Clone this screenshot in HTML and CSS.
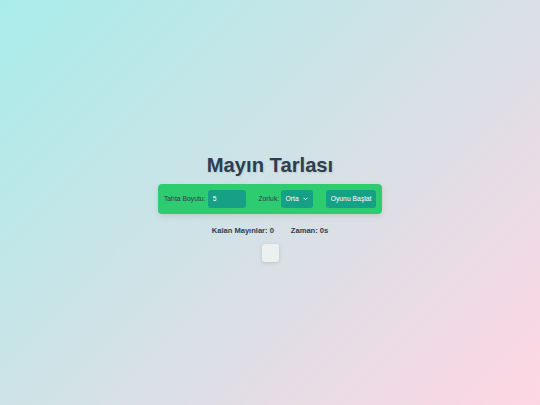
FILE: index.html
```html
<!DOCTYPE html>
<html lang="tr">
<head>
<meta charset="utf-8">
<title>Mayın Tarlası</title>
<link rel="stylesheet" href="styles.css">
</head>
<body>
<h1 class="title">Mayın Tarlası</h1>
<div class="controls">
  <label class="label" for="size">Tahta Boyutu:</label>
  <input class="input" id="size" type="number" value="5">
  <label class="label label-gap" for="level">Zorluk:</label>
  <span class="select-wrap">
    <select class="select" id="level">
      <option>Kolay</option>
      <option selected>Orta</option>
      <option>Zor</option>
    </select>
    <svg class="chevron" width="5" height="4" viewBox="0 0 10 7" aria-hidden="true"><path d="M1.5 1.5 L5 5 L8.5 1.5" fill="none" stroke="#fff" stroke-width="2" stroke-linecap="round" stroke-linejoin="round"/></svg>
  </span>
  <button class="button">Oyunu Başlat</button>
</div>
<div class="status">
  <span>Kalan Mayınlar: 0</span>
  <span>Zaman: 0s</span>
</div>
<div class="board"></div>
</body>
</html>
```

FILE: styles.css
```css
html, body {
  margin: 0;
  height: 100%;
}
body {
  font-family: "Liberation Sans", Arial, sans-serif;
  background: linear-gradient(135deg, #a8edea 0%, #fed6e3 100%);
  display: flex;
  flex-direction: column;
  align-items: center;
  justify-content: center;
  color: #2c3e50;
}
.title {
  font-size: 20.2px;
  font-weight: bold;
  margin: 10px 0 7px;
  color: #2c3e50;
  text-shadow: 1px 1px 2px rgba(0, 0, 0, 0.1);
}
.controls {
  display: flex;
  align-items: center;
  background: #2ecc71;
  padding: 6px 6px;
  border-radius: 4px;
  box-shadow: 0 2px 6px rgba(0, 0, 0, 0.1);
}
.label {
  font-size: 6.8px;
  color: #2c3e50;
  margin-right: 2.3px;
}
.label-gap {
  margin-left: 12.6px;
}
.input, .select, .button {
  box-sizing: border-box;
  height: 18px;
  border: none;
  border-radius: 3px;
  background: #16a085;
  color: #fff;
  font-family: "Liberation Sans", Arial, sans-serif;
  font-size: 6.8px;
  outline: none;
}
.input {
  width: 38px;
  padding: 0 5px;
  -moz-appearance: textfield;
}
.input::-webkit-inner-spin-button,
.input::-webkit-outer-spin-button {
  -webkit-appearance: none;
  margin: 0;
}
.select-wrap {
  position: relative;
  display: flex;
}
.select {
  -webkit-appearance: none;
  appearance: none;
  width: 32px;
  padding: 0 0 0 4px;
}
.chevron {
  position: absolute;
  right: 5px;
  top: 7px;
  pointer-events: none;
}
.button {
  margin-left: 12.6px;
  padding: 0 4.6px;
  cursor: pointer;
}
.status {
  display: flex;
  gap: 17px;
  margin-top: 12.5px;
  font-size: 7.56px;
  font-weight: bold;
  color: #2c3e50;
}
.board {
  margin-top: 9px;
  width: 17px;
  height: 17.5px;
  background: #ecf0f1;
  border-radius: 3px;
  box-shadow: 0 1px 4px rgba(0, 0, 0, 0.12);
}
```
